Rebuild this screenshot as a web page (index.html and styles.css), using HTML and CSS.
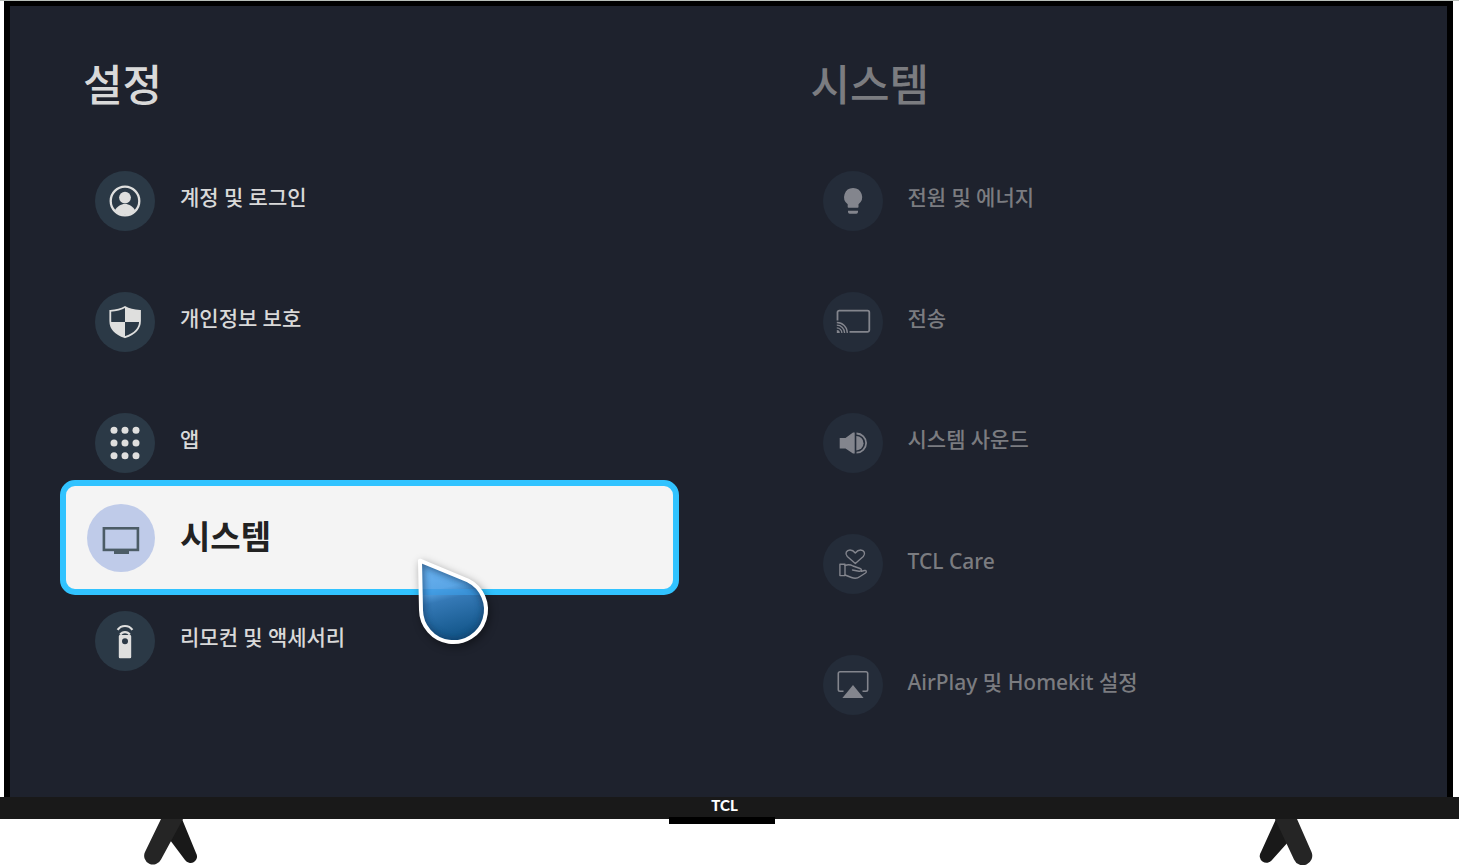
FILE: index.html
```html
<!DOCTYPE html>
<html lang="ko">
<head>
  <meta charset="UTF-8">
  <meta name="viewport" content="width=device-width, initial-scale=1.0">
  <title>설정</title>
  <link rel="stylesheet" href="styles.css">
</head>
<body>

  <div class="tv">
    <!-- Screen -->
    <main class="screen">
      <section class="panel">
        <h1 class="panel-title">설정</h1>
        <nav class="menu">
          <button class="item">
            <svg class="icon" viewBox="0 0 60 60">
              <circle cx="30" cy="30" r="14.3" fill="none" stroke="currentColor" stroke-width="2.3"/>
              <circle cx="30" cy="26.6" r="5.9"/>
              <path d="M19.8 39.5C22 35.5 25.8 33 30 33s8 2.5 10.2 6.5A14.3 14.3 0 0 1 19.8 39.5z"/>
            </svg>
            <span class="label">계정 및 로그인</span>
          </button>
          <button class="item">
            <svg class="icon" viewBox="0 0 60 60">
              <path d="M30 15C26 17.5 21 18.6 15.3 18.8V29C15.3 37 22 42.5 30 45.2C38 42.5 45 37 45 29V18.8C39 18.6 34 17.5 30 15z" fill="none" stroke="currentColor" stroke-width="1.8"/>
              <path d="M30 15C34 17.5 39 18.6 45 18.8V30H30z"/>
              <path d="M30 30V45.2C22 42.5 15.5 37 15.3 30z"/>
            </svg>
            <span class="label">개인정보 보호</span>
          </button>
          <button class="item">
            <svg class="icon" viewBox="0 0 60 60">
              <circle cx="19" cy="17.3" r="3.5"/><circle cx="30" cy="17.3" r="3.5"/><circle cx="41" cy="17.3" r="3.5"/>
              <circle cx="19" cy="30" r="3.5"/><circle cx="30" cy="30" r="3.5"/><circle cx="41" cy="30" r="3.5"/>
              <circle cx="19" cy="42.7" r="3.5"/><circle cx="30" cy="42.7" r="3.5"/><circle cx="41" cy="42.7" r="3.5"/>
            </svg>
            <span class="label">앱</span>
          </button>
          <button class="item selected">
            <svg class="icon" viewBox="0 0 68 68">
              <rect x="16.9" y="24.3" width="34" height="21.6" fill="none" stroke="currentColor" stroke-width="2.6"/>
              <rect x="27" y="46" width="15" height="4"/>
            </svg>
            <span class="label">시스템</span>
            <!-- Pointer -->
            <svg class="pointer" viewBox="0 0 90 105">
              <defs>
                <linearGradient id="drop" x1="0.3" y1="0" x2="0.5" y2="1">
                  <stop offset="0" stop-color="#6db3f0"/>
                  <stop offset="0.33" stop-color="#5ba6e6"/>
                  <stop offset="0.48" stop-color="#3579b6"/>
                  <stop offset="1" stop-color="#0f5285"/>
                </linearGradient>
                <clipPath id="dropClip">
                  <path d="M10 10.7L58 30.5A32.5 32.5 0 1 1 11 60z"/>
                </clipPath>
                <filter id="soft"><feGaussianBlur stdDeviation="3"/></filter>
              </defs>
              <path d="M10 10.7L58 30.5A32.5 32.5 0 1 1 11 60z" fill="url(#drop)"/>
              <rect x="8" y="39" width="72" height="6" fill="#3a9ae2" opacity="0.7" clip-path="url(#dropClip)"/>
              <g clip-path="url(#dropClip)">
                <path d="M10 10.7L58 30.5A32.5 32.5 0 1 1 11 60z" fill="none" stroke="#123a62" stroke-width="8" opacity="0.6" filter="url(#soft)"/>
              </g>
              <path d="M10 10.7L58 30.5A32.5 32.5 0 1 1 11 60z" fill="none" stroke="#fff" stroke-width="4" stroke-linejoin="round"/>
            </svg>
          </button>
          <button class="item">
            <svg class="icon" viewBox="0 0 60 60">
              <path d="M25 24H35a1.2 1.2 0 0 1 1.2 1.2V46a1.2 1.2 0 0 1-1.2 1.2H25a1.2 1.2 0 0 1-1.2-1.2V25.2A1.2 1.2 0 0 1 25 24zM30 27.3a3 3 0 1 0 0 6a3 3 0 1 0 0-6z" fill-rule="evenodd"/>
              <path d="M22.6 18.9A9 9 0 0 1 37.4 18.9M25.2 23.6A5.8 5.8 0 0 1 34.8 23.6" fill="none" stroke="currentColor" stroke-width="2.2"/>
            </svg>
            <span class="label">리모컨 및 액세서리</span>
          </button>
        </nav>
      </section>

      <section class="panel dimmed">
        <h2 class="panel-title">시스템</h2>
        <nav class="menu">
          <button class="item">
            <svg class="icon" viewBox="0 0 60 60">
              <path d="M30 17A9 9 0 0 0 24.7 33.2V36a.8.8 0 0 0 .8.8H34.7a.8.8 0 0 0 .8-.8V33.2A9 9 0 0 0 30 17zM25 39.7H35V41a1.7 1.7 0 0 1-1.7 1.7H26.7A1.7 1.7 0 0 1 25 41z"/>
            </svg>
            <span class="label">전원 및 에너지</span>
          </button>
          <button class="item">
            <svg class="icon" viewBox="0 0 60 60">
              <g fill="none" stroke="currentColor">
                <path d="M14.5 28.5V20.5a1.8 1.8 0 0 1 1.8-1.8H44.5a1.8 1.8 0 0 1 1.8 1.8V38a1.8 1.8 0 0 1-1.8 1.8H26.5" stroke-width="1.8"/>
                <path d="M13.8 30.5A10.5 10.5 0 0 1 24.3 41M13.8 33.2A7.8 7.8 0 0 1 21.6 41M13.8 35.9A5.1 5.1 0 0 1 18.9 41" stroke-width="1.3"/>
              </g>
              <path d="M13.8 38a3 3 0 0 1 3 3H13.8z"/>
            </svg>
            <span class="label">전송</span>
          </button>
          <button class="item">
            <svg class="icon" viewBox="0 0 60 60">
              <path d="M16.7 25H22.5L30 19.5H31.7V40.5H30L22.5 35.5H16.7z"/>
              <path d="M33.3 23A7.2 7.2 0 0 1 33.3 37.4z"/>
              <path d="M33.5 20.5A9.6 9.6 0 0 1 33.5 39.7" fill="none" stroke="currentColor" stroke-width="1.8"/>
            </svg>
            <span class="label">시스템 사운드</span>
          </button>
          <button class="item">
            <svg class="icon" viewBox="0 0 60 60">
              <g fill="none" stroke="currentColor" stroke-width="1.4" stroke-linejoin="round" stroke-linecap="round">
                <path d="M32.3 29.5L24.3 22.5C21.5 19.5 23.5 16 27 16C29.6 16 31 17.3 32.3 19C33.6 17.3 35 16 37.6 16C41 16 43 19.5 40.3 22.5z"/>
                <path d="M16.9 30.2H22V41.6H16.9z"/>
                <path d="M22 31.5C25 30.2 27.5 30.5 30 32L37 34.5C39.5 35.5 38.5 37.5 36 37.2L29.5 36M38.5 37.3L41.5 36.5C43.5 36 43.8 38 42.5 39L37 42.5C34 44.8 31.5 44.7 28.5 43.5L22 41"/>
              </g>
            </svg>
            <span class="label latin">TCL Care</span>
          </button>
          <button class="item">
            <svg class="icon" viewBox="0 0 60 60">
              <path d="M20.5 36.3H17A1.7 1.7 0 0 1 15.3 34.6V18.4A1.7 1.7 0 0 1 17 16.7H43A1.7 1.7 0 0 1 44.7 18.4V34.6A1.7 1.7 0 0 1 43 36.3H39.5" fill="none" stroke="currentColor" stroke-width="1.6"/>
              <path d="M30 30L40.6 43H19.4z"/>
            </svg>
            <span class="label latin">AirPlay 및 Homekit 설정</span>
          </button>
        </nav>
      </section>
    </main>

    <!-- Bottom bar and stand -->
    <div class="chin">TCL</div>
    <div class="stand">
      <svg class="foot" viewBox="0 0 56 46">
        <path d="M25 0H39L53 34A6.5 6.5 0 0 1 42 41L27 21z" fill="#191919"/>
        <path d="M18 0H40L18 40.5A8.7 8.7 0 0 1 2 33z" fill="#252525"/>
      </svg>
      <div class="sensor"></div>
      <svg class="foot" viewBox="0 0 56 46">
        <path d="M31 0H17L2 33A6.5 6.5 0 0 0 13 41L30 22z" fill="#191919"/>
        <path d="M38 0H16L35 40.5A8.7 8.7 0 0 0 52.5 33z" fill="#252525"/>
      </svg>
    </div>
  </div>

</body>
</html>
```
FILE: styles.css
```css
/* General Styles */
* {
  box-sizing: border-box;
}

body {
  margin: 0;
  background: #ffffff;
  font-family: Lato, "Noto Sans CJK KR", sans-serif;
}

/* TV Frame */
.tv {
  border-top: 1px solid #b9bfba;
}

.screen {
  display: grid;
  grid-template-columns: 1fr 1fr;
  column-gap: 109px;
  margin: 0 6px 0 4px;
  padding: 47px 41px 82px 50px;
  background: #1e222d;
  border: 6px solid #000000;
  border-top-width: 5px;
  border-bottom: none;
}

/* Panels */
.panel {
  color: #d9d9d9;
}

.panel-title {
  margin: 0 0 54px;
  padding-left: 23px;
  font-size: 43px;
  font-weight: 500;
  line-height: 64px;
}

.menu {
  display: flex;
  flex-direction: column;
}

/* Menu Items */
.item {
  display: flex;
  align-items: center;
  gap: 25px;
  margin: 0 0 61px;
  padding: 0 0 0 35px;
  background: none;
  border: none;
  color: inherit;
  font-family: inherit;
  font-size: 21px;
  font-weight: 500;
  text-align: left;
  cursor: pointer;
}

.item:last-child {
  margin-bottom: 0;
}

.icon {
  flex: none;
  width: 60px;
  height: 60px;
  border-radius: 50%;
  background: #2b3946;
  color: #dfdfde;
  fill: currentColor;
}

.label {
  padding-bottom: 8px;
  line-height: 30px;
}

.latin {
  padding-bottom: 6px;
  font-family: "Noto Sans", "Noto Sans CJK KR", sans-serif;
}

/* Selected Item */
.item.selected {
  position: relative;
  height: 115px;
  margin: -54px 0 16px;
  padding-left: 21px;
  background: #f4f4f4;
  border: 6px solid #31c3ff;
  border-radius: 15px;
  color: #222222;
  font-size: 33px;
  font-weight: 700;
}

.selected .label {
  padding-bottom: 4px;
}

.selected .icon {
  width: 68px;
  height: 68px;
  background: #bfcbe9;
  color: #4c5c66;
}

.pointer {
  position: absolute;
  left: 344px;
  top: 64px;
  width: 90px;
  height: 105px;
  filter: drop-shadow(2px 3px 4px rgba(0, 0, 0, 0.4));
}

/* Dimmed Panel */
.dimmed {
  color: #7b7c80;
}

.dimmed .icon {
  background: #242c39;
  color: #83858d;
}

/* Bottom Bar */
.chin {
  height: 22px;
  padding-right: 10px;
  background: #191919;
  color: #ffffff;
  font-size: 15px;
  font-weight: 900;
  line-height: 16px;
  text-align: center;
}

/* Stand */
.stand {
  display: flex;
  justify-content: space-between;
  padding: 0 144px 0 143px;
}

.foot {
  width: 56px;
  height: 46px;
}

.sensor {
  width: 106px;
  height: 7px;
  margin: -2px 15px 0 0;
  background: #000000;
}
```
